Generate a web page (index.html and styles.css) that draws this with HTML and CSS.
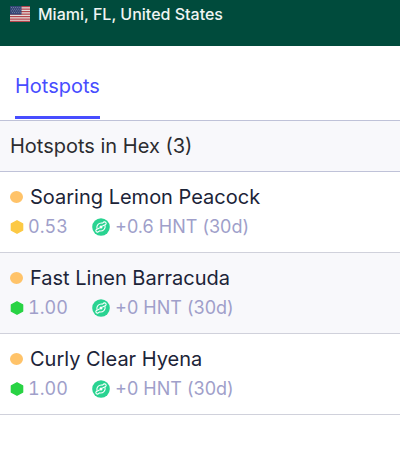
FILE: index.html
```html
<!DOCTYPE html>
<html lang="en">
<head>
<meta charset="utf-8">
<meta name="viewport" content="width=device-width, initial-scale=1">
<title>Hotspots in Hex</title>
<link rel="stylesheet" href="styles.css">
</head>
<body>
<svg class="defs" aria-hidden="true">
  <symbol id="hex" viewBox="0 0 14 14"><path d="M7 .8 12.6 3.8V10.2L7 13.2 1.4 10.2V3.8Z" fill="currentColor" stroke="currentColor" stroke-width="1.4" stroke-linejoin="round"/></symbol>
  <symbol id="hnt" viewBox="0 0 18 18">
    <circle cx="9" cy="9" r="8.8" fill="#29d391"/>
    <g fill="none" stroke="#fff" stroke-width="1.1" stroke-linecap="round" stroke-linejoin="round">
      <path d="M4.9 10.2C4.4 7.2 6.8 4.8 10 5.1 10.8 5.2 11.2 4.2 12.2 3.9 13.4 3.6 14.4 4.6 14.1 5.8 13.9 6.5 13.2 6.9 12.5 7.1L10.6 8"/>
      <path d="M13.1 7.8C13.6 10.8 11.2 13.2 8 12.9 7.2 12.8 6.8 13.8 5.8 14.1 4.6 14.4 3.6 13.4 3.9 12.2 4.1 11.5 4.8 11.1 5.5 10.9L7.4 10"/>
    </g>
    <circle cx="9" cy="9" r="1.5" fill="#fff"/>
  </symbol>
</svg>
<header class="place">
  <svg class="flag" viewBox="0 0 20 16" role="img" aria-label="United States flag">
    <path fill="#e4dfdc" d="M0 0h20v16H0z"/>
    <path stroke="#b4444c" stroke-width="1.25" d="M0 .6h20M0 3.1h20M0 5.6h20M0 8h20M0 10.5h20M0 13h20M0 15.4h20"/>
    <path fill="#344675" d="M0 0h11.5v8.6H0z"/>
    <path stroke="#8994b4" stroke-width=".8" stroke-dasharray=".9 1.2" d="M1 1.5h10M2 3.2h9M1 4.9h10M2 6.6h9"/>
  </svg>
  <h1 class="place-name">Miami, FL, United States</h1>
</header>
<nav class="tabs"><a class="tab" href="#hotspots" aria-current="page">Hotspots</a></nav>
<main id="hotspots">
  <h2 class="section-title">Hotspots in Hex (3)</h2>
  <ul class="list">
    <li class="row">
      <h3 class="name"><span class="dot"></span>Soaring Lemon Peacock</h3>
      <div class="meta">
        <span class="scale"><svg class="hex partial"><use href="#hex"/></svg>0.53</span>
        <span class="reward"><svg class="hnt"><use href="#hnt"/></svg>+0.6 HNT (30d)</span>
      </div>
    </li>
    <li class="row">
      <h3 class="name"><span class="dot"></span>Fast Linen Barracuda</h3>
      <div class="meta">
        <span class="scale"><svg class="hex"><use href="#hex"/></svg>1.00</span>
        <span class="reward"><svg class="hnt"><use href="#hnt"/></svg>+0 HNT (30d)</span>
      </div>
    </li>
    <li class="row">
      <h3 class="name"><span class="dot"></span>Curly Clear Hyena</h3>
      <div class="meta">
        <span class="scale"><svg class="hex"><use href="#hex"/></svg>1.00</span>
        <span class="reward"><svg class="hnt"><use href="#hnt"/></svg>+0 HNT (30d)</span>
      </div>
    </li>
  </ul>
</main>
</body>
</html>
```
FILE: styles.css
```css
* { box-sizing: border-box; }

body {
  margin: 0;
  background: #fff;
  color: #1c2438;
  font-family: Inter, "Liberation Sans", sans-serif;
  font-size: 20px;
}

h1, h2, h3 { margin: 0; font-weight: 400; }

.defs { position: absolute; width: 0; height: 0; }

.place {
  display: flex;
  align-items: center;
  gap: 8px;
  padding: 0 10px 18px;
  background: #004b3c;
  color: #f0f5f3;
}

.flag { width: 20px; height: 16px; }

.place-name {
  font-size: 16px;
  line-height: 28px;
  font-weight: 500;
}

.tabs {
  display: flex;
  padding: 0 15px;
  border-bottom: 1px solid #bfc2d8;
}

.tab {
  padding: 28px 0 18px;
  border-bottom: 3px solid #474dff;
  margin-bottom: 1px;
  color: #474dff;
  line-height: 24px;
  text-decoration: none;
}

.section-title {
  padding: 0 10px;
  border-bottom: 1px solid #bfc2d8;
  background: #f8f8fb;
  color: #2c2c30;
  font-size: 20px;
  line-height: 50px;
}

.list { margin: 0; padding: 0; list-style: none; }

.row {
  padding: 10px;
  border-bottom: 1px solid #d0d1db;
}

.row:nth-child(even) { background: #f8f8fb; }

.name {
  display: flex;
  align-items: center;
  gap: 7px;
  font-size: 20px;
  line-height: 30px;
}

.dot {
  width: 13px;
  height: 12px;
  border-radius: 50%;
  background: #ffc369;
}

.meta {
  display: flex;
  color: #a09fca;
  font-size: 18px;
  line-height: 30px;
}

.scale, .reward { display: flex; align-items: center; }

.scale {
  width: 82px;
  gap: 4px;
  font-variant-numeric: tabular-nums;
}

.reward { gap: 5px; }

.hex { width: 14px; height: 14px; color: #29d344; }

.hex.partial { color: #fcc944; }

.hnt { width: 18px; height: 18px; }
```
